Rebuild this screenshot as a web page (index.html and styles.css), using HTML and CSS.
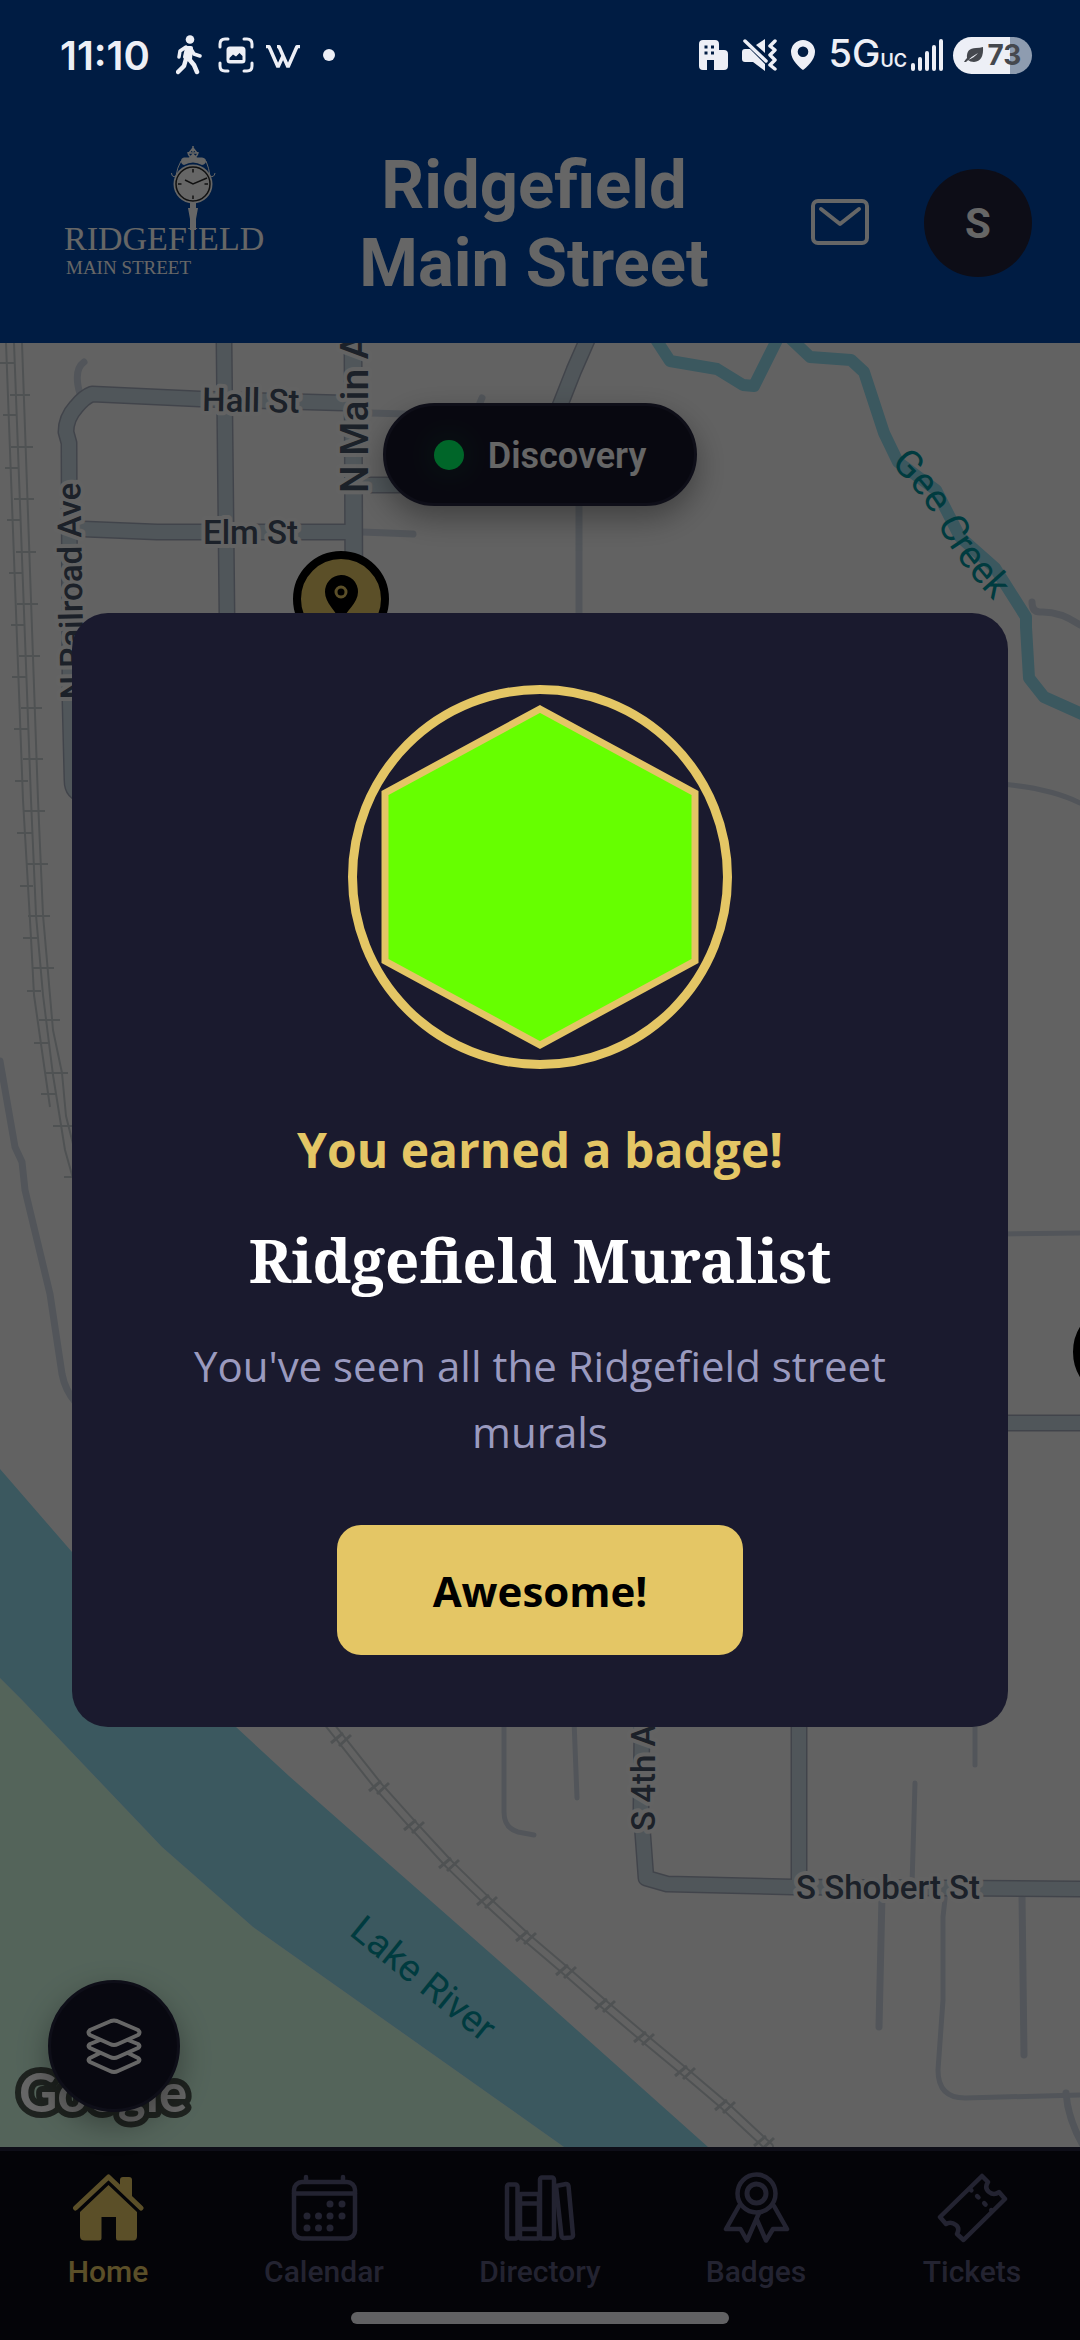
FILE: index.html
```html
<!DOCTYPE html>
<html lang="en">
<head>
<meta charset="utf-8">
<meta name="viewport" content="width=device-width, initial-scale=1">
<title>Ridgefield Main Street</title>
<link rel="stylesheet" href="styles.css">
</head>
<body>
<div class="app">
  <header class="top">
    <div class="status">
      <div class="status-left">
        <span class="clock">11:10</span>
        <svg class="ic-walk" viewBox="0 0 26 40" fill="none" stroke="currentColor" stroke-linecap="round" stroke-linejoin="round"><circle cx="14" cy="4.500" r="4.300" fill="currentColor" stroke="none"/><path d="M11 13 L15 13 L14 24 L9 22 Z" fill="currentColor" stroke-width="4"/><path d="M10 12 L4 16 L3 22 M15 14 L18 19 L24 21" stroke-width="3.500"/><path d="M10 24 L8 31 L2 37 M13 24 L18 30 L21 37" stroke-width="4.500"/></svg>
        <svg class="ic-shot" viewBox="0 0 36 36" fill="none" stroke="currentColor" stroke-width="3" stroke-linecap="round"><path d="M2 10 V7 Q2 2 7 2 H10 M26 2 H29 Q34 2 34 7 V10 M34 26 V29 Q34 34 29 34 H26 M10 34 H7 Q2 34 2 29 V26"/><path fill="currentColor" stroke="none" fill-rule="evenodd" d="M12 9.500 H24 Q27.500 9.500 27.500 13 V23 Q27.500 26.500 24 26.500 H12 Q8.500 26.500 8.500 23 V13 Q8.500 9.500 12 9.500 Z M11.500 23 H24.500 V19 L21.500 16 L18 19.500 L15 17.500 L11.500 21 Z"/></svg>
        <svg class="ic-w" viewBox="0 0 34 24" fill="none" stroke="currentColor" stroke-width="3.500" stroke-linejoin="bevel"><path d="M0 1.500 H3 L12 22 L17.500 10 M11 1.500 H13 L22 22 L31 1.500 H34"/></svg>
        <svg class="ic-dot" viewBox="0 0 12 12" fill="currentColor"><circle cx="6" cy="6" r="6"/></svg>
      </div>
      <div class="status-right">
        <svg class="ic-city" viewBox="0 0 29 30" fill="currentColor" fill-rule="evenodd"><path d="M4 0 H16 Q20 0 20 4 V10 H25 Q29 10 29 14 V26 Q29 30 25 30 H15 V20 H8 V30 H4 Q0 30 0 26 V4 Q0 0 4 0 Z M5.500 5.500 V8.500 H8.500 V5.500 Z M12 5.500 V8.500 H15 V5.500 Z M5.500 11.500 V14.500 H8.500 V11.500 Z M12 11.500 V14.500 H15 V11.500 Z"/></svg>
        <svg class="ic-mute" viewBox="0 0 35 32" fill="currentColor"><path d="M3 10 H8 L23 25 V32 L11 23 H3 Q0 23 0 20 V13 Q0 10 3 10 Z M14 6 L23 0 V14 Z"/><path d="M3 2 L24 22" stroke="currentColor" stroke-width="3.500" stroke-linecap="round"/><path d="M33 2 L28 7 L33 11 L28 16 L33 21 L28 26 L33 30" fill="none" stroke="currentColor" stroke-width="3.500" stroke-linecap="round" stroke-linejoin="round"/></svg>
        <svg class="ic-loc" viewBox="0 0 24 30" fill="currentColor" fill-rule="evenodd"><path d="M12 0 A12 12 0 0 1 24 12 C24 20 15 28 12 30 C9 28 0 20 0 12 A12 12 0 0 1 12 0 Z M12 6.500 A5.300 5.300 0 1 0 12 17.100 A5.300 5.300 0 1 0 12 6.500 Z"/></svg>
        <span class="net">5G<small>UC</small></span>
        <svg class="ic-bars" viewBox="0 0 32 34" stroke="currentColor" stroke-width="4" stroke-linecap="round"><path d="M2 27 V31 M9 21 V31 M16 15 V31 M23 9 V31 M30 3 V31"/></svg>
        <span class="battery"><svg class="ic-leaf" viewBox="0 0 20 16" fill="currentColor"><path d="M19 0 Q20 14 10 15 Q6 15 4 13 Q10 11 14 6 Q8 9 2 15 L0 15 Q1 13 3 11 Q2 1 12 1 Q16 1 19 0 Z"/></svg>73</span>
      </div>
    </div>
    <div class="brand">
      <svg class="logo" viewBox="48 143 216 160" role="img" aria-label="Ridgefield Main Street">
        <g fill="none" stroke="#fff" stroke-width="1.500"><path d="M193 146 V158 M193 148 L189 153 H192 M193 148 L197 153 H194 M193 158 Q188 156 188 152 M193 158 Q198 156 198 152"/><path d="M181 161 Q177 168 176 176 Q172 178 171.500 173 M206 161 Q209 168 210 176 Q214 178 215 173" stroke-width="1"/></g>
        <path d="M184 157.500 H189 L193 153 L197 157.500 H202 Q206 158 206 161 Q206 164 202 165 Q193 160 184 165 Q181 164 181 161 Q181 158 184 157.500 Z" fill="#fff"/>
        <circle cx="193" cy="184" r="19.500" fill="#fff"/><circle cx="193" cy="184" r="17" fill="none" stroke="#2b2b2b" stroke-width="1.500"/>
        <path d="M193 169 V172.500 M193 195.500 V199 M178 184 H181.500 M204.500 184 H208 M185 180 L193 184 L207 178" fill="none" stroke="#2b2b2b" stroke-width="1.500"/>
        <path d="M190 203 H196 V208 H198 L196 219 V230 H190 V219 L188 208 H190 Z" fill="#fff"/>
        <text x="64" y="250" class="logo-name">RIDGEFIELD</text>
        <text x="66" y="274" class="logo-sub">MAIN STREET</text>
      </svg>
      <h1>Ridgefield<br>Main Street</h1>
      <button class="icon-btn" aria-label="Messages"><svg viewBox="0 0 72 72" fill="none" stroke="currentColor" stroke-width="4" stroke-linecap="round" stroke-linejoin="round"><rect x="9" y="14" width="54" height="42" rx="5"/><path d="M17 22 L36 37 L55 22"/></svg></button>
      <button class="avatar" aria-label="Account">S</button>
    </div>
  </header>

  <main class="map">
    <svg class="map-art" viewBox="0 343 1080 1804" preserveAspectRatio="xMidYMid slice" fill="none" stroke-linecap="round" stroke-linejoin="round">
      <rect x="0" y="343" width="1080" height="1804" fill="#f5f5f5"/>
      <path d="M0 1678 L22 1700 L162 1847 L253 1927 L540 2130 L564 2147 H0 Z" fill="#d1f9e1"/>
      <path d="M0 1469 L72 1552 L236 1727 L289 1776 L382 1858 L540 1997 L708 2147 H564 L540 2130 L253 1927 L162 1847 L22 1700 L0 1678 Z" fill="#93dbee"/>
      <g class="rail">
        <path d="M6 343 L23 800 L31 938 L34 995 L50 1107"/>
        <path d="M14 343 L31 800 L36 915 L43 995 L53 1075 L65 1150 L74 1182"/>
        <path d="M22 343 L38 800 L43 915 L53 1030 L62 1073 L66 1116 L74 1148"/>
        <path d="M0 363 H14 M3 415 H16 M5 468 H18 M7 520 H20 M9 573 H22 M11 625 H24 M12 677 H26 M14 729 H28 M15 781 H28 M17 833 H32 M20 886 H33 M23 938 H37 M27 991 H41 M34 1043 H48 M41 1094 H56"/>
        <path d="M10 395 H30 M11 447 H33 M14 499 H34 M16 552 H36 M17 604 H38 M19 656 H40 M21 708 H42 M23 759 H43 M24 811 H45 M26 864 H48 M28 916 H50 M33 968 H54 M39 1020 H60 M46 1073 H68 M53 1126 H74 M64 1177 H74"/>
      </g>
      <path d="M325 1719 L341 1739 L379 1787 L414 1826 L449 1864 L487 1901 L526 1937 L566 1971 L605 2005 L644 2038 L685 2072 L725 2106 L769 2147" stroke="#c6ccd0" stroke-width="10"/>
      <path d="M325 1719 L341 1739 L379 1787 L414 1826 L449 1864 L487 1901 L526 1937 L566 1971 L605 2005 L644 2038 L685 2072 L725 2106 L769 2147" stroke="#f5f5f5" stroke-width="6"/>
      <g class="ties"><path id="tie" d="M331 1743 L343 1733 M339 1746 L351 1735"/><use href="#tie" x="38" y="48"/><use href="#tie" x="73" y="87"/><use href="#tie" x="108" y="125"/><use href="#tie" x="146" y="162"/><use href="#tie" x="185" y="198"/><use href="#tie" x="225" y="232"/><use href="#tie" x="264" y="266"/><use href="#tie" x="303" y="299"/><use href="#tie" x="344" y="333"/><use href="#tie" x="384" y="367"/><use href="#tie" x="423" y="403"/></g>
      <g class="lane">
        <path d="M84 362 Q73 370 80 394 M362 532 L413 534 M370 413 L406 414 M482 398 L477 410 M579 500 V620 M1032 602 Q1032 612 1040 612 Q1060 611 1080 625 M0 1061 L15 1147 L22 1162 L25 1190 L50 1294 L62 1374 Q65 1390 76 1403 M882 1895 L879 2027 M1022 1895 L1024 2055 M1066 2093 Q1068 2120 1084 2147"/>
        <path class="thin" d="M1000 784 Q1050 788 1080 803 M1000 1234 L1080 1233 M504 1720 V1812 Q504 1828 518 1832 L534 1835 M574 1720 L577 1798 M975 1720 V1765 M915 1783 L912 1885 M946 1890 L943 1917 V2000 L938 2070 Q938 2098 965 2098 L1080 2095"/>
      </g>
      <g class="road-edge">
        <path d="M84 794 Q72 794 72 780 L70 700 L69 443 L66 432 Q66 418 76 407 Q84 397 92 394 L200 399 L344 403 M69 529 H83 L157 532 L350 532 M224 340 L227 620 M354 485 H400 M588 338 L574 370 L559 408 M642 1720 L641 1810 L646 1878 L667 1884 L793 1887 L1085 1889 M799 1720 V1887 M1000 1423 H1085"/>
        <path class="wide" d="M353 340 L354 620"/>
      </g>
      <g class="road">
        <path d="M84 794 Q72 794 72 780 L70 700 L69 443 L66 432 Q66 418 76 407 Q84 397 92 394 L200 399 L344 403 M69 529 H83 L157 532 L350 532 M224 340 L227 620 M354 485 H400 M588 338 L574 370 L559 408 M642 1720 L641 1810 L646 1878 L667 1884 L793 1887 L1085 1889 M799 1720 V1887 M1000 1423 H1085"/>
        <path class="wide" d="M353 340 L354 620"/>
      </g>
      <path d="M655 338 L670 361 L717 369 L743 385 L754 386 L778 338 M790 338 L810 357 L851 360 L864 372 L884 433 L898 462 L936 490 L960 537 L995 568 L1026 617 L1026 627 L1029 678 L1044 697 L1084 715" stroke="#93dbee" stroke-width="12"/>
      <g class="street">
        <text transform="translate(202 411) rotate(1)">Hall St</text>
        <text transform="translate(203 544)">Elm St</text>
        <text class="major" transform="translate(368 493) rotate(-90)">N Main Ave</text>
        <text transform="translate(84 699) rotate(-91)">N Railroad Ave</text>
        <text transform="translate(655 1831) rotate(-90)">S 4th Ave</text>
        <text transform="translate(796 1899)">S Shobert St</text>
      </g>
      <path id="creek" d="M890 464 Q928 500 942 532 Q955 560 1004 612"/>
      <g class="water"><text><textPath href="#creek">Gee Creek</textPath></text><text transform="translate(348 1934) rotate(39)">Lake River</text></g>
      <g><circle cx="341" cy="599" r="44" fill="#e4c665" stroke="#000" stroke-width="8"/><path fill="#000" d="M341 575 A16.500 16.500 0 0 1 358 592 C358 603 346 611 341 622 C336 611 325 603 325 592 A16.500 16.500 0 0 1 341 575 Z"/><circle cx="341" cy="592" r="5" stroke="#e4c665" stroke-width="3"/></g>
      <circle cx="1121" cy="1352" r="44" fill="#e4c665" stroke="#000" stroke-width="8"/>
      <text class="google" x="19" y="2112">Google</text>
    </svg>
    <button class="mode"><span class="mode-dot"></span>Discovery</button>
    <button class="layers" aria-label="Map layers"><svg viewBox="0 0 72 72" fill="none" stroke="currentColor" stroke-width="4" stroke-linejoin="round" stroke-linecap="round"><path d="M33 11 Q36 10 39 11 L60 20 Q63 23 60 25 L40 34 Q36 36 32 34 L12 25 Q9 23 12 20 Z"/><path d="M22 30 L12 34 Q9 36 12 38 L32 47 Q36 49 40 47 L60 38 Q63 36 60 34 L50 30"/><path d="M22 43 L12 48 Q9 50 12 52 L32 61 Q36 63 40 61 L60 52 Q63 50 60 48 L50 43"/></svg></button>
  </main>

  <nav class="tabs">
    <div class="tab-row">
      <a href="#home" class="tab active"><svg viewBox="0 0 72 72" fill="currentColor"><path d="M48 18 V8 Q48 5 51 5 H57 Q60 5 60 8 V28 Z"/><path d="M3.500 36 L36.500 5 L69 36" fill="none" stroke="currentColor" stroke-width="5" stroke-linecap="round" stroke-linejoin="round"/><path d="M36.500 13 L65 40 V64 Q65 68.500 61 68.500 H46 Q44 68.500 44 66 V45 H29.500 V66 Q29.500 68.500 27 68.500 H13 Q8 68.500 8 64 V40 Z"/></svg>Home</a>
      <a href="#calendar" class="tab"><svg viewBox="0 0 72 72" fill="none" stroke="currentColor" stroke-width="4.500" stroke-linecap="round"><rect x="6" y="10" width="61" height="56.500" rx="8"/><path d="M6 21.500 H67 M18 5 V9 M55 5 V9"/><g fill="currentColor" stroke="none"><circle cx="42" cy="32" r="3.500"/><circle cx="54" cy="32" r="3.500"/><circle cx="19" cy="44" r="3.500"/><circle cx="30.500" cy="44" r="3.500"/><circle cx="42" cy="44" r="3.500"/><circle cx="54" cy="44" r="3.500"/><circle cx="19" cy="56" r="3.500"/><circle cx="30.500" cy="56" r="3.500"/><circle cx="42" cy="56" r="3.500"/></g></svg>Calendar</a>
      <a href="#directory" class="tab"><svg viewBox="0 0 72 72" fill="none" stroke="currentColor" stroke-width="4.500" stroke-linejoin="round"><rect x="3" y="12.500" width="10.500" height="54" rx="2"/><rect x="16" y="22" width="19" height="44.500" rx="1"/><path d="M16 31.500 H35 M16 57 H35"/><rect x="36" y="5.500" width="14" height="61" rx="2"/><path d="M52 14 L62 12 Q64 12 64.500 14 L69 63 Q69 65 67 65.500 L60 66 Q58 66 57.500 64 Z"/></svg>Directory</a>
      <a href="#badges" class="tab"><svg viewBox="0 0 72 72" fill="none" stroke="currentColor" stroke-width="4.500" stroke-linejoin="round" stroke-linecap="round"><circle cx="36.500" cy="21.500" r="19"/><circle cx="36.500" cy="21.500" r="9.500" stroke-width="5"/><path d="M19 34 L6 57 H20.500 L27 68.500 L39 41 M54 34 L67 57 H53 L46 68.500 L37 48"/></svg>Badges</a>
      <a href="#tickets" class="tab"><svg viewBox="0 0 72 72" fill="none" stroke="currentColor" stroke-width="4.500" stroke-linejoin="round" stroke-linecap="round"><path d="M46 4 L52 10 Q48 16 53 20 Q58 24 63 20 L69 27 L27.500 68 L21 62 Q24 56 20 53 Q15 49 10 52 L4 45 Z"/><path d="M34 17 L56 39" stroke-dasharray="2 8"/></svg>Tickets</a>
    </div>
    <div class="home-bar"></div>
  </nav>

  <div class="scrim">
    <section class="dialog" role="dialog" aria-modal="true" aria-labelledby="award-title">
      <svg class="badge" viewBox="0 0 384 384"><circle cx="192" cy="192" r="187.500" fill="none" stroke="#e4c665" stroke-width="9"/><path d="M192 24 L347 108 V276 L192 360 L37 276 V108 Z" fill="#66ff00" stroke="#e4c665" stroke-width="7"/></svg>
      <p class="earned">You earned a badge!</p>
      <h2 id="award-title">Ridgefield Muralist</h2>
      <p class="detail">You've seen all the Ridgefield street murals</p>
      <button class="confirm">Awesome!</button>
    </section>
  </div>
</div>
</body>
</html>
```
FILE: styles.css
```css
* { box-sizing: border-box; }
body { margin: 0; font-family: Roboto, sans-serif; background: #0a0a14; }
button { font: inherit; border: 0; padding: 0; color: inherit; background: none; }
svg { display: block; flex: none; }
h1, h2, p { margin: 0; }

.app { position: relative; display: flex; flex-direction: column; min-height: 100vh; overflow: hidden; }

/* header */
.top { background: #0047a7; color: #fff; }
.status { position: relative; z-index: 3; display: flex; justify-content: space-between; height: 103px; padding: 7px 48px 0 60px; color: #edeff6; font-family: Inter, sans-serif; }
.status-left, .status-right { display: flex; align-items: center; }
.status-left { gap: 16px; }
.status-right { gap: 14px; }
.clock { font-size: 40px; font-weight: 600; width: 100px; }
.ic-walk { width: 26px; height: 40px; }
.ic-shot { width: 36px; height: 36px; }
.ic-w { width: 34px; height: 24px; margin: 4px 7px 0 -4px; }
.ic-dot { width: 12px; height: 12px; }
.ic-city { width: 29px; height: 30px; }
.ic-mute { width: 35px; height: 32px; }
.ic-loc { width: 24px; height: 30px; }
.net { padding-top: 4px; font-size: 38px; font-weight: 500; line-height: 40px; }
.net small { font-size: 18px; font-weight: 600; }
.ic-bars { width: 32px; height: 34px; margin-left: -10px; }
.battery { display: flex; align-items: center; justify-content: center; gap: 4px; width: 79px; height: 37px; border-radius: 19px; margin-left: -4px; background: linear-gradient(90deg, #edeff6 72%, #8e9cb0 72%); color: #45484e; font-size: 28px; font-weight: 700; }
.ic-leaf { width: 20px; height: 16px; }

.brand { display: flex; align-items: center; height: 240px; padding: 0 48px; }
.logo { width: 216px; height: 160px; }
.logo-name, .logo-sub { fill: #fff; font-family: "Liberation Serif", serif; }
.logo-name { font-size: 34px; }
.logo-sub { font-size: 19px; }
h1 { flex: 1; padding-top: 2px; text-align: center; font-size: 67px; line-height: 78px; font-weight: 700; }
.icon-btn { width: 72px; height: 72px; margin-right: 48px; }
.avatar { width: 108px; height: 108px; border-radius: 50%; background: #21213a; font-size: 42px; font-weight: 700; text-align: center; }

/* map */
.map { position: relative; flex: 1; display: flex; flex-direction: column; align-items: center; justify-content: space-between; padding: 60px 48px 35px; }
.map-art { position: absolute; inset: 0; width: 100%; height: 100%; }
.rail { stroke: #c6ccd0; stroke-width: 2; stroke-linecap: butt; }
.ties { stroke: #c6ccd0; stroke-width: 3; stroke-linecap: butt; }
.lane { stroke: #ccd5e0; stroke-width: 7; }
.lane .thin { stroke-width: 5; }
.road-edge { stroke: #a4abbb; stroke-width: 17; }
.road-edge .wide { stroke-width: 19; }
.road { stroke: #c8d8e1; stroke-width: 14; }
.road .wide { stroke-width: 16; }
.street { fill: #465467; stroke: #f8f8f8; stroke-width: 8; paint-order: stroke; font-size: 33px; font-weight: 500; }
.street .major { font-size: 39px; }
.water { fill: #00949f; font-size: 38px; }
.google { fill: #fff; stroke: #4c574f; stroke-width: 12; paint-order: stroke; font-family: Lato, sans-serif; font-size: 53px; font-weight: 700; }

.mode, .layers { position: relative; background: #16162a; color: #fff; border: 3px solid #24243c; box-shadow: 0 12px 30px rgba(0, 0, 0, .35); }
.mode { display: flex; align-items: center; gap: 24px; height: 103px; padding: 3px 48px 0; border-radius: 52px; font-size: 36px; font-weight: 600; }
.mode-dot { width: 30px; height: 30px; margin-bottom: 3px; border-radius: 50%; background: #00ff66; box-shadow: 0 0 30px rgba(0, 255, 102, .2); }
.layers { align-self: flex-start; display: grid; place-items: center; width: 132px; height: 132px; border-radius: 50%; }
.layers svg, .icon-btn svg { width: 72px; height: 72px; }

/* bottom tabs */
.tabs { background: #0a0a14; border-top: 4px solid #24243c; padding: 21px 0 16px; }
.tab-row { display: flex; }
.tab { flex: 1; display: flex; flex-direction: column; align-items: center; gap: 8px; color: #58587a; font-size: 30px; line-height: 40px; font-weight: 500; text-decoration: none; }
.tab svg { width: 72px; height: 72px; }
.tab.active { color: #e4c665; }
.home-bar { width: 35%; height: 12px; margin: 20px auto 0; border-radius: 6px; background: #f3f3f7; }

/* award dialog */
.scrim { position: absolute; inset: 0; z-index: 2; display: flex; align-items: center; justify-content: center; padding: 72px; background: rgba(0, 0, 0, .6); }
.dialog { display: flex; flex-direction: column; align-items: center; width: 100%; padding: 72px; border-radius: 36px; background: #1a1a2e; text-align: center; font-family: "Open Sans", sans-serif; }
.badge { width: 384px; height: 384px; }
.earned { margin-top: 48px; color: #e4c665; font-size: 48px; line-height: 66px; font-weight: 700; }
h2 { margin-top: 36px; color: #fff; font-family: "Noto Serif", "DejaVu Serif Condensed", "DejaVu Serif", serif; font-size: 60px; line-height: 82px; font-weight: 700; }
.detail { margin-top: 32px; color: #9a9abf; font-size: 42px; line-height: 66px; }
.confirm { height: 130px; margin-top: 60px; padding: 0 96px; border-radius: 24px; background: #e4c665; color: #000; font-size: 42px; font-weight: 700; }
```
